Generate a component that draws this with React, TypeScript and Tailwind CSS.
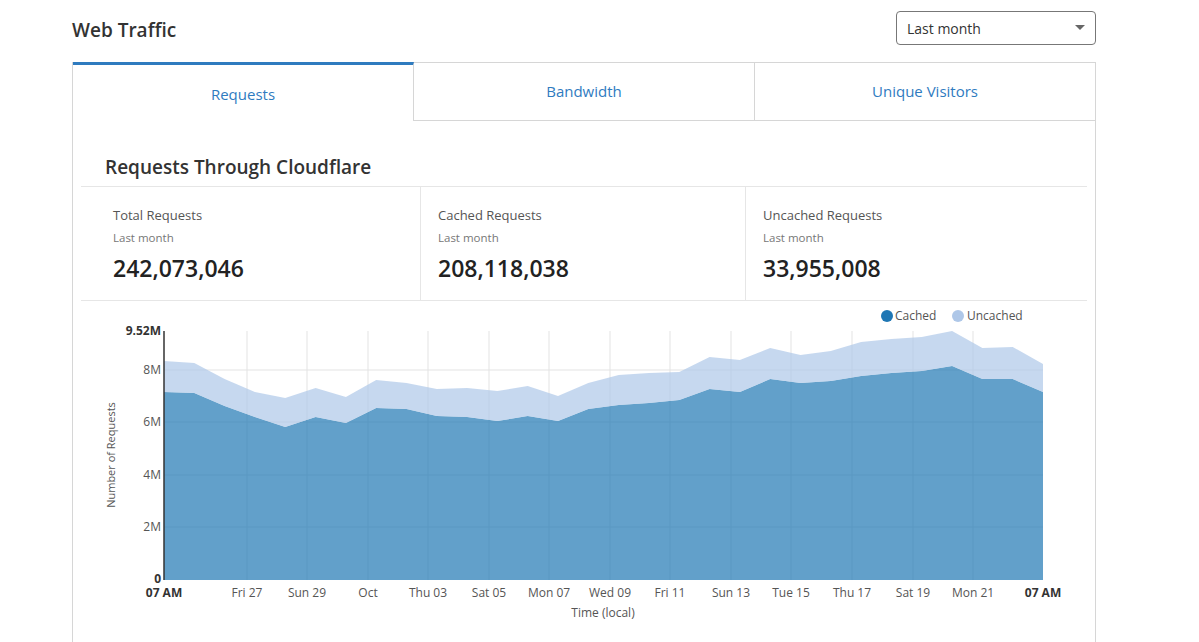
import React from 'react';

const FONT = { fontFamily: '"Open Sans", "Noto Sans", sans-serif' };

const cachedY = [392, 393, 406, 417, 427, 417, 423, 408, 409, 416, 417, 421, 416, 421, 409, 405, 403, 400, 389, 392, 379, 383, 381, 376, 373, 371, 366, 379, 379, 392];
const totalY = [361, 363, 379, 392, 398, 388, 397, 380, 383, 389, 388, 391, 386, 396, 383, 375, 373, 372, 357, 360, 348, 355, 351, 342, 339, 337, 331, 348, 347, 364];

const X0 = 164;
const X1 = 1043;
const Y0 = 580;
const step = (X1 - X0) / (cachedY.length - 1);
const xs = cachedY.map((_, i) => X0 + i * step);

const line = (ys: number[]) => ys.map((y, i) => `${xs[i].toFixed(1)},${y}`).join(' L');
const cachedPath = `M${X0},${Y0} L${line(cachedY)} L${X1},${Y0} Z`;
const uncachedPath = `M${line(totalY)} L${[...cachedY].reverse().map((y, i) => `${xs[xs.length - 1 - i].toFixed(1)},${y}`).join(' L')} Z`;

const gridX = [247, 307, 368, 428, 489, 549, 610, 670, 731, 791, 852, 913, 973];
const xLabels = ['Fri 27', 'Sun 29', 'Oct', 'Thu 03', 'Sat 05', 'Mon 07', 'Wed 09', 'Fri 11', 'Sun 13', 'Tue 15', 'Thu 17', 'Sat 19', 'Mon 21'];
const yTicks = [
  { y: 370, label: '8M' },
  { y: 422, label: '6M' },
  { y: 475, label: '4M' },
  { y: 527, label: '2M' },
];

const stats = [
  { label: 'Total Requests', value: '242,073,046', cls: 'w-[340px] pl-[32px] border-r' },
  { label: 'Cached Requests', value: '208,118,038', cls: 'w-[325px] pl-[17px] border-r' },
  { label: 'Uncached Requests', value: '33,955,008', cls: 'flex-1 pl-[17px]' },
];

function Chart() {
  return (
    <svg width={1006} height={341} viewBox="81 301 1006 341" className="block">
      {gridX.map((x) => (
        <line key={x} x1={x} x2={x} y1={331} y2={Y0} stroke="#e3e3e3" strokeWidth={1} />
      ))}
      {yTicks.map((t) => (
        <line key={t.y} x1={X0} x2={X1} y1={t.y} y2={t.y} stroke="#e3e3e3" strokeWidth={1} />
      ))}
      <path d={cachedPath} fill="#1f77b4" fillOpacity={0.7} />
      <path d={uncachedPath} fill="#aec7e8" fillOpacity={0.7} />
      <line x1={X0} x2={X0} y1={331} y2={Y0} stroke="#333" strokeWidth={1.5} />

      <g fontSize={12} fill="#555" textAnchor="end">
        <text x={161} y={335} fontWeight={700} fill="#333">9.52M</text>
        {yTicks.map((t) => (
          <text key={t.y} x={161} y={t.y + 4}>{t.label}</text>
        ))}
        <text x={161} y={583} fontWeight={700} fill="#333">0</text>
      </g>

      <g fontSize={12} fill="#555" textAnchor="middle">
        <text x={X0} y={597} fontWeight={700} fill="#333">07 AM</text>
        {gridX.map((x, i) => (
          <text key={x} x={x} y={597}>{xLabels[i]}</text>
        ))}
        <text x={X1} y={597} fontWeight={700} fill="#333">07 AM</text>
        <text x={603} y={617}>Time (local)</text>
      </g>

      <text x={0} y={0} fontSize={11} fill="#555" textAnchor="middle" transform="translate(115 455) rotate(-90)">
        Number of Requests
      </text>

      <g fontSize={12} fill="#555">
        <circle cx={887} cy={316} r={6} fill="#1f77b4" />
        <text x={895} y={320}>Cached</text>
        <circle cx={958} cy={316} r={6} fill="#aec7e8" />
        <text x={967} y={320}>Uncached</text>
      </g>
    </svg>
  );
}

export default function App() {
  return (
    <div className="w-[1199px] h-[642px] bg-white overflow-hidden" style={FONT}>
      <div className="ml-[72px] w-[1024px]">
        <div className="h-[62px] flex items-start justify-between">
          <h1 className="mt-[16px] text-[19px] font-semibold text-[#333] leading-[28px]">Web Traffic</h1>
          <div className="mt-[11px] w-[200px] h-[34px] border border-[#777] rounded-[4px] flex items-center justify-between pl-[10px] pr-[10px]">
            <span className="text-[14px] text-[#333]">Last month</span>
            <svg width="10" height="6" viewBox="0 0 10 6">
              <path d="M0 0 L10 0 L5 5 Z" fill="#666" />
            </svg>
          </div>
        </div>

        <div className="border-l border-r border-[#d6d6d6] w-[1024px]">
          <div className="flex h-[59px]">
            <div className="w-[341px] border-t-[3px] border-[#2f7bbf] border-r border-r-[#d6d6d6] flex items-center justify-center pt-[2px]">
              <span className="text-[15px] text-[#2f7bbf]">Requests</span>
            </div>
            <div className="w-[341px] border-t border-b border-r border-[#d6d6d6] flex items-center justify-center">
              <span className="text-[15px] text-[#2f7bbf]">Bandwidth</span>
            </div>
            <div className="flex-1 border-t border-b border-[#d6d6d6] flex items-center justify-center">
              <span className="text-[15px] text-[#2f7bbf]">Unique Visitors</span>
            </div>
          </div>

          <div className="px-[8px]">
            <div className="h-[66px] border-b border-[#e6e6e6] flex items-end pl-[24px] pb-[6px]">
              <h2 className="text-[19px] font-semibold text-[#333] leading-[26px]">Requests Through Cloudflare</h2>
            </div>
            <div className="flex h-[114px] border-b border-[#e6e6e6]">
              {stats.map((s) => (
                <div key={s.label} className={`${s.cls} border-[#e6e6e6] pt-[18px]`}>
                  <div className="text-[13px] text-[#555] leading-[20px]">{s.label}</div>
                  <div className="text-[11.5px] text-[#777] leading-[18px] mt-[4px]">Last month</div>
                  <div className="text-[23px] font-semibold text-[#222] leading-[30px] mt-[6px]">{s.value}</div>
                </div>
              ))}
            </div>
            <Chart />
          </div>
        </div>
      </div>
    </div>
  );
}
